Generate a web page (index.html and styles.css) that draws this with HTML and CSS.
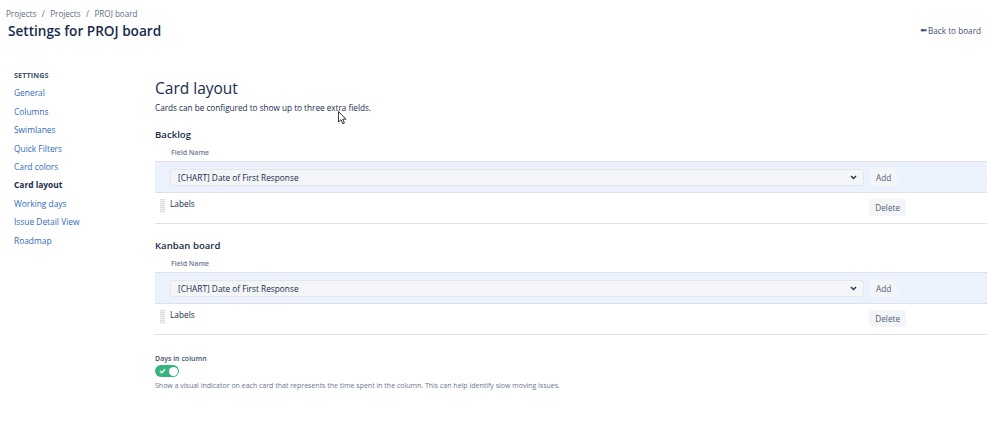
FILE: index.html
```html
<!DOCTYPE html>
<html lang="en">
<head>
<meta charset="utf-8">
<title>Settings for PROJ board</title>
<link rel="stylesheet" href="styles.css">
</head>
<body>
<header class="page-header">
  <nav class="crumbs"><a>Projects</a><span class="sep">/</span><a>Projects</a><span class="sep">/</span><a>PROJ board</a></nav>
  <div class="title-row">
    <h1 class="title">Settings for PROJ board</h1>
    <a class="back"><span class="back-arrow">&#11013;</span>Back to board</a>
  </div>
</header>
<div class="layout">
  <aside class="sidebar">
    <div class="side-head">SETTINGS</div>
    <a class="side-item">General</a>
    <a class="side-item">Columns</a>
    <a class="side-item">Swimlanes</a>
    <a class="side-item">Quick Filters</a>
    <a class="side-item">Card colors</a>
    <a class="side-item active">Card layout</a>
    <a class="side-item">Working days</a>
    <a class="side-item">Issue Detail View</a>
    <a class="side-item">Roadmap</a>
  </aside>
  <main class="content">
    <h2 class="h2">Card layout</h2>
    <p class="desc">Cards can be configured to show up to three extra fields.</p>

    <h3 class="h3">Backlog</h3>
    <div class="field-label">Field Name</div>
    <div class="table">
      <div class="row add-row">
        <div class="select"><span>[CHART] Date of First Response</span><svg class="chev" width="7" height="5" viewBox="0 0 7 5"><path d="M1 1 L3.5 3.5 L6 1" fill="none" stroke="#253858" stroke-width="1.5"/></svg></div>
        <button class="btn">Add</button>
      </div>
      <div class="row item-row">
        <span class="handle"></span>
        <span class="item-name">Labels</span>
        <button class="btn">Delete</button>
      </div>
    </div>

    <h3 class="h3 h3-second">Kanban board</h3>
    <div class="field-label">Field Name</div>
    <div class="table">
      <div class="row add-row">
        <div class="select"><span>[CHART] Date of First Response</span><svg class="chev" width="7" height="5" viewBox="0 0 7 5"><path d="M1 1 L3.5 3.5 L6 1" fill="none" stroke="#253858" stroke-width="1.5"/></svg></div>
        <button class="btn">Add</button>
      </div>
      <div class="row item-row">
        <span class="handle"></span>
        <span class="item-name">Labels</span>
        <button class="btn">Delete</button>
      </div>
    </div>

    <div class="days">
      <div class="days-label">Days in column</div>
      <div class="toggle"><svg class="check" width="7" height="6" viewBox="0 0 7 6"><path d="M1 3 L2.8 4.8 L6 1.2" fill="none" stroke="#fff" stroke-width="1.4"/></svg><span class="knob"></span></div>
      <p class="days-desc">Show a visual indicator on each card that represents the time spent in the column. This can help identify slow moving issues.</p>
    </div>
  </main>
</div>
<svg class="cursor" width="10" height="14" viewBox="0 0 10 14"><path d="M0.5 0.5 L0.5 11 L3 8.7 L4.8 12.8 L6.4 12.1 L4.7 8.2 L8 8.2 Z" fill="#fff" stroke="#222" stroke-width="0.9" stroke-linejoin="round"/></svg>
</body>
</html>
```
FILE: styles.css
```css
* { box-sizing: border-box; }
html, body { margin: 0; padding: 0; background: #fff; }
body {
  font-family: "Open Sans", "Noto Sans", "Liberation Sans", sans-serif;
  color: #172b4d;
  width: 999px;
  height: 436px;
  overflow: hidden;
  position: relative;
}
a { text-decoration: none; }

.page-header { padding: 8px 12px 0 6px; }
.crumbs { font-size: 8.1px; line-height: 12px; color: #5e6c84; }
.crumbs .sep { margin: 0 5.5px; }
.title-row { display: flex; align-items: center; justify-content: space-between; margin-top: 1px; height: 20px; padding-left: 2px; }
.title { margin: 0; font-size: 13.6px; font-weight: 600; line-height: 20px; color: #172b4d; }
.back { font-size: 8.2px; color: #42526e; display: flex; align-items: center; margin-top: -1px; padding-right: 6px; }
.back-arrow { font-size: 8px; color: #42526e; margin-right: 1px; font-family: "DejaVu Sans", sans-serif; }

.layout { display: flex; margin-top: 25px; }
.sidebar { width: 155px; padding-left: 14px; display: flex; flex-direction: column; flex-shrink: 0; }
.side-head { font-size: 7.2px; font-weight: 700; color: #42526e; line-height: 18px; height: 18.4px; letter-spacing: 0.1px; }
.side-item { font-size: 8.4px; line-height: 18.4px; height: 18.4px; color: #2e6bc0; }
.side-item.active { color: #172b4d; font-weight: 700; }

.content { flex: 1; padding-right: 12px; padding-top: 12px; }
.h2 { margin: 0; font-size: 15.5px; font-weight: 500; line-height: 20px; color: #172b4d; }
.desc { margin: 4px 0 0; font-size: 8.2px; line-height: 12px; color: #172b4d; }
.h3 { margin: 14px 0 0; font-size: 9.6px; font-weight: 600; line-height: 14px; color: #172b4d; }
.h3-second { margin-top: 15px; }
.field-label { margin: 6px 0 0 16px; font-size: 7px; font-weight: 600; line-height: 10px; color: #6b778c; }
.table { margin-top: 3px; border-top: 1.5px solid #dfe1e6; }
.row { display: flex; align-items: center; border-bottom: 1.5px solid #dfe1e6; }
.add-row { background: #ebf2fe; height: 31px; padding-left: 15px; }
.item-row { height: 31px; padding-left: 5px; align-items: flex-start; padding-top: 5px; }
.select {
  width: 694px; height: 17px; background: #f4f5f7; border: 1px solid #e4e6ea; border-radius: 3px;
  display: flex; align-items: center; justify-content: space-between; padding: 0 6px 0 7px;
  font-size: 8.3px; color: #172b4d;
}
.chev { display: block; }
.btn {
  font-family: inherit; font-size: 8.2px; color: #505f79; background: #f4f5f7; border: none; border-radius: 3px;
  height: 17px; padding: 0 6px; margin-left: 6px; cursor: pointer;
}
.item-row .btn { margin-left: auto; margin-right: 81px; margin-top: 1px; }
.handle {
  width: 5px; height: 14px; margin-top: 1px;
  background: repeating-linear-gradient(to bottom, #dcdfe4 0, #dcdfe4 1px, #f1f2f4 1px, #f1f2f4 2px);
}
.item-name { font-size: 8.3px; line-height: 12px; margin-left: 5px; color: #172b4d; }

.days { margin-top: 19px; }
.days-label { font-size: 7px; font-weight: 600; line-height: 10px; color: #42526e; }
.toggle {
  margin-top: 1px; width: 24px; height: 12px; border-radius: 6px; background: #36b37e;
  display: flex; align-items: center; justify-content: space-between; padding: 0 1.5px 0 4px;
}
.check { display: block; }
.knob { width: 9px; height: 9px; border-radius: 50%; background: #fff; }
.days-desc { margin: 4px 0 0; font-size: 7px; line-height: 10px; color: #6b778c; }

.cursor { position: absolute; left: 338px; top: 111px; }
```
